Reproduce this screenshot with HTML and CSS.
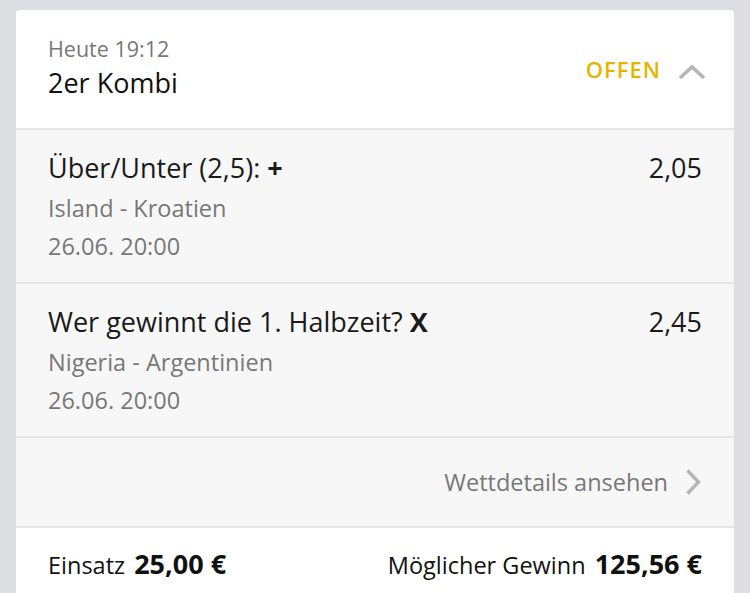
FILE: index.html
```html
<!DOCTYPE html>
<html lang="de">
<head>
<meta charset="utf-8">
<link rel="stylesheet" href="styles.css">
</head>
<body>
<div class="card">
  <div class="header">
    <div class="header-left">
      <div class="time">Heute 19:12</div>
      <div class="kind">2er Kombi</div>
    </div>
    <div class="header-right">
      <span class="status">OFFEN</span>
      <svg class="chev-up" width="28" height="16" viewBox="0 0 28 16"><path d="M2 14 L14 3 L26 14" fill="none" stroke="#b5b5b5" stroke-width="3.6"/></svg>
    </div>
  </div>
  <div class="sel">
    <div class="sel-top">
      <div class="sel-title">Über/Unter (2,5): <b>+</b></div>
      <div class="odds">2,05</div>
    </div>
    <div class="sel-sub first">Island - Kroatien</div>
    <div class="sel-sub">26.06. 20:00</div>
  </div>
  <div class="sel">
    <div class="sel-top">
      <div class="sel-title">Wer gewinnt die 1. Halbzeit? <b>X</b></div>
      <div class="odds">2,45</div>
    </div>
    <div class="sel-sub first">Nigeria - Argentinien</div>
    <div class="sel-sub">26.06. 20:00</div>
  </div>
  <div class="details">
    <span>Wettdetails ansehen</span>
    <svg class="chev-right" width="18" height="28" viewBox="0 0 18 28"><path d="M3.5 2.5 L14.5 14 L3.5 25.5" fill="none" stroke="#b5b5b5" stroke-width="3.4"/></svg>
  </div>
  <div class="footer">
    <div class="f-item">Einsatz <b>25,00 €</b></div>
    <div class="f-item">Möglicher Gewinn <b>125,56 €</b></div>
  </div>
</div>
</body>
</html>
```
FILE: styles.css
```css
html, body {
  margin: 0;
  padding: 0;
  background: #dddee1;
  font-family: "Open Sans", "Noto Sans", sans-serif;
}
body {
  padding: 10px 16px 0;
  height: 593px;
  box-sizing: border-box;
  overflow: hidden;
}
.card {
  background: #fff;
  border-radius: 4px 4px 0 0;
  overflow: hidden;
}
.header {
  height: 120px;
  box-sizing: border-box;
  padding: 25px 28px 0 32px;
  display: flex;
  align-items: flex-start;
  justify-content: space-between;
  border-bottom: 2px solid #e6e6e6;
}
.time {
  font-size: 21.5px;
  color: #777;
  line-height: 28px;
}
.kind {
  font-size: 27px;
  color: #111;
  line-height: 34px;
  margin-top: 3px;
}
.header-right {
  display: flex;
  align-items: center;
  gap: 17px;
  margin-top: 19.5px;
}
.status {
  color: #e4b500;
  font-weight: 600;
  font-size: 22px;
  line-height: 28px;
  letter-spacing: 1px;
}
.chev-up {
  margin-top: 6px;
}
.sel {
  background: #f7f7f7;
  padding: 20px 32px 0;
  height: 154px;
  box-sizing: border-box;
  border-bottom: 2px solid #e6e6e6;
}
.sel-top {
  display: flex;
  justify-content: space-between;
  align-items: baseline;
}
.sel-title, .odds {
  font-size: 27px;
  line-height: 36px;
  color: #1a1a1a;
}
.sel-title b {
  font-weight: 700;
}
.sel-sub {
  font-size: 23.5px;
  color: #777;
  line-height: 38px;
}
.sel-sub.first {
  margin-top: 3px;
}
.details {
  background: #f7f7f7;
  height: 90px;
  box-sizing: border-box;
  padding: 0 32px;
  display: flex;
  justify-content: flex-end;
  align-items: center;
  gap: 16px;
  font-size: 23.5px;
  color: #777;
  border-bottom: 2px solid #e6e6e6;
}
.footer {
  height: 65px;
  padding: 18px 32px 0;
  display: flex;
  justify-content: space-between;
  align-items: baseline;
  font-size: 23.5px;
  line-height: 36px;
  color: #111;
  box-sizing: border-box;
}
.f-item b {
  font-size: 27px;
  font-weight: 700;
  margin-left: 3px;
}
```
